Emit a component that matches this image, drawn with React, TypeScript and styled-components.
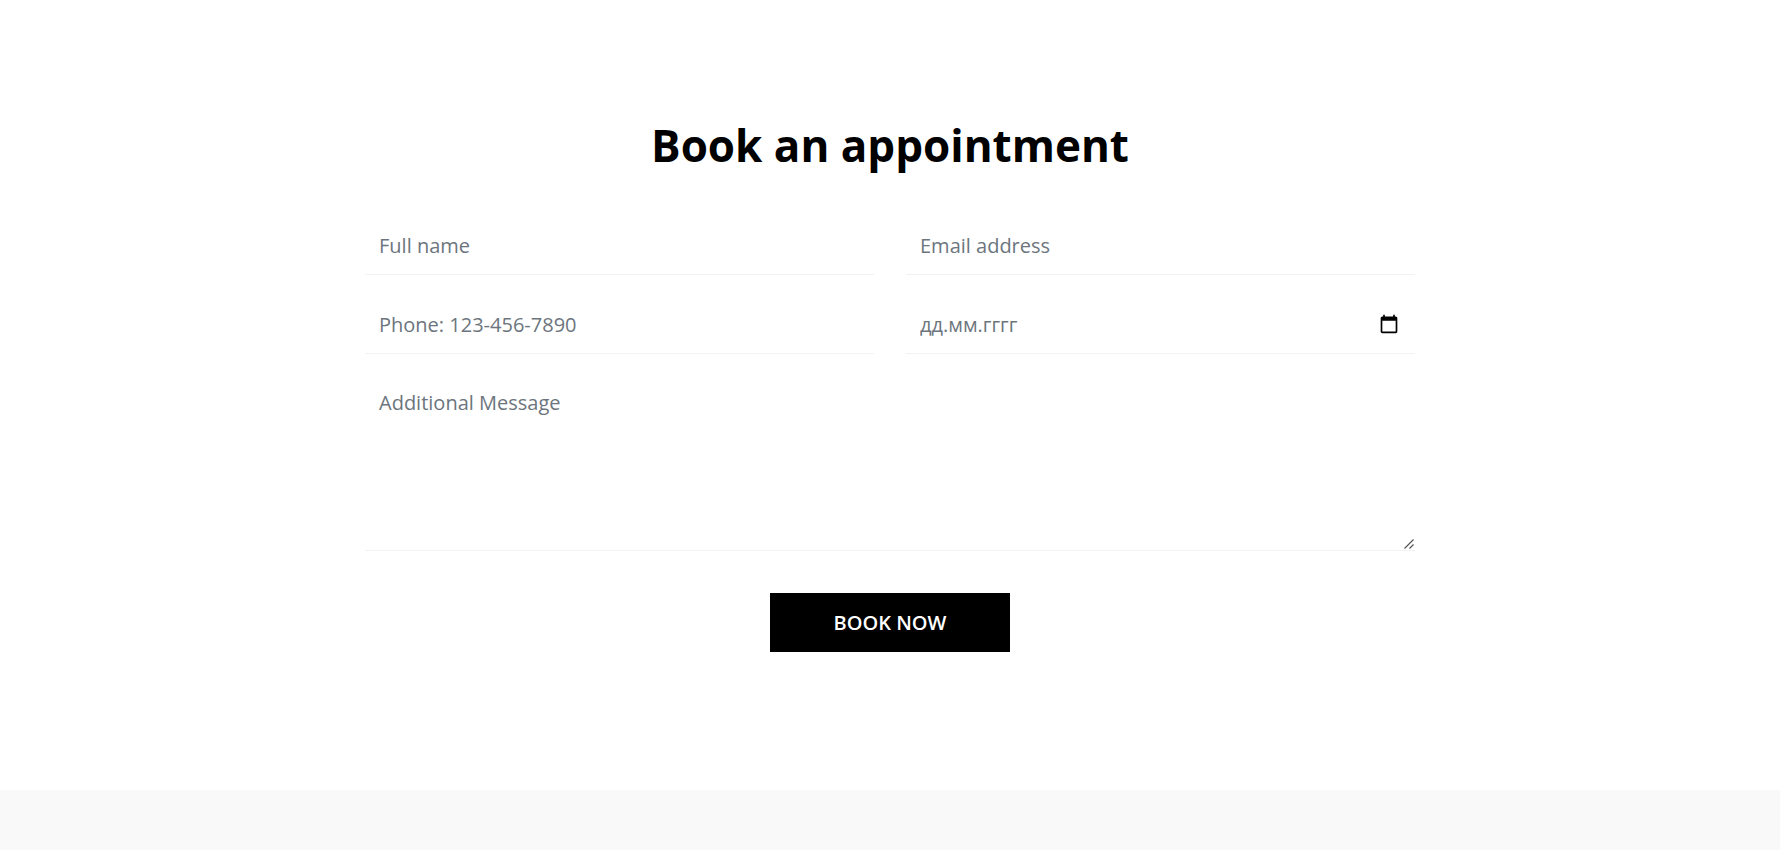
import React from "react";
import styled, { createGlobalStyle, css } from "styled-components";

const GlobalStyle = createGlobalStyle`
  *, *::before, *::after { box-sizing: border-box; }
  body {
    margin: 0;
    background: #f9f9f9;
    color: #000;
    font-family: "Open Sans", sans-serif;
  }
`;

const Section = styled.section`
  background: #fff;
  padding: 113px 24px 138px;
`;

const Container = styled.div`
  max-width: 1050px;
  margin: 0 auto;
`;

const Title = styled.h2`
  margin: 0 0 39px;
  font-size: 44px;
  line-height: 64px;
  font-weight: 700;
  text-align: center;
`;

const Form = styled.form`
  display: grid;
  grid-template-columns: 1fr 1fr;
  column-gap: 32px;
  row-gap: 20px;

  @media (max-width: 700px) {
    grid-template-columns: 1fr;
  }
`;

const fieldStyle = css`
  display: block;
  width: 100%;
  margin: 0;
  padding: 14px;
  border: 0;
  border-bottom: 1px solid #f2f2f2;
  border-radius: 0;
  outline: 0;
  background: transparent;
  color: #212529;
  font-family: inherit;
  font-size: 20px;
  line-height: 30px;

  &::placeholder {
    color: #6c757d;
    opacity: 1;
  }
`;

const Input = styled.input`
  ${fieldStyle}
  height: 59px;
`;

const DateField = styled.div`
  display: flex;
  align-items: center;
  border-bottom: 1px solid #f2f2f2;
`;

const DateInput = styled(Input)`
  flex: 1;
  width: auto;
  min-width: 0;
  height: 58px;
  border: 0;
`;

const PickerButton = styled.button`
  display: flex;
  margin: 0 16px 0 0;
  padding: 0;
  border: 0;
  background: none;
  cursor: pointer;
`;

const MessageField = styled.div`
  position: relative;
  grid-column: 1 / -1;
`;

const Message = styled.textarea`
  ${fieldStyle}
  height: 177px;
  resize: vertical;

  &::-webkit-resizer {
    background: transparent;
  }
`;

const Grip = styled.svg`
  position: absolute;
  right: 1px;
  bottom: 2px;
  pointer-events: none;
`;

const Submit = styled.button`
  grid-column: 1 / -1;
  justify-self: center;
  width: 240px;
  height: 59px;
  margin-top: 22px;
  border: 0;
  background: #000;
  color: #fff;
  font-family: inherit;
  font-size: 20px;
  line-height: 30px;
  font-weight: 600;
  text-transform: uppercase;
  cursor: pointer;
`;

const CalendarIcon = () => (
  <svg width="20" height="20" viewBox="0 0 24 24" aria-hidden="true">
    <path d="M20 3h-1V1h-2v2H7V1H5v2H4c-1.1 0-2 .9-2 2v16c0 1.1.9 2 2 2h16c1.1 0 2-.9 2-2V5c0-1.1-.9-2-2-2zm0 18H4V8h16v13z" fill="#000" />
  </svg>
);

export default function App() {
  return (
    <>
      <GlobalStyle />
      <Section>
        <Container>
          <Title>Book an appointment</Title>
          <Form onSubmit={(event) => event.preventDefault()}>
            <Input type="text" name="name" placeholder="Full name" aria-label="Full name" />
            <Input type="email" name="email" placeholder="Email address" aria-label="Email address" />
            <Input type="tel" name="phone" placeholder="Phone: 123-456-7890" aria-label="Phone" />
            <DateField>
              <DateInput type="text" name="date" placeholder="дд.мм.гггг" aria-label="Date" />
              <PickerButton type="button" aria-label="Choose date">
                <CalendarIcon />
              </PickerButton>
            </DateField>
            <MessageField>
              <Message name="message" placeholder="Additional Message" aria-label="Additional Message" />
              <Grip width="10" height="10" viewBox="0 0 10 10" aria-hidden="true">
                <path d="M.5 9.5l9-9M5.5 9.5l4-4" stroke="#555" strokeWidth="1.2" fill="none" />
              </Grip>
            </MessageField>
            <Submit type="submit">Book now</Submit>
          </Form>
        </Container>
      </Section>
    </>
  );
}
